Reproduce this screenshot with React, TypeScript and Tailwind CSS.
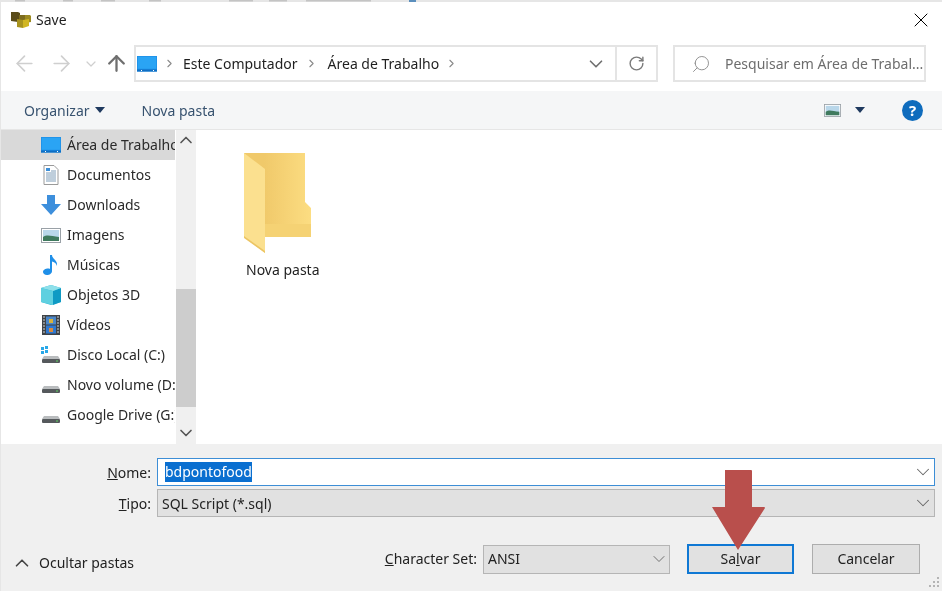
import { ChevronDown, ChevronUp, ChevronRight, ArrowLeft, ArrowRight, ArrowUp, RotateCw, Search, X } from "lucide-react";

function DesktopIcon() {
  return (
    <svg width="20" height="16" viewBox="0 0 20 16">
      <rect x="0" y="0" width="20" height="15.5" fill="#1e8fe6" />
      <rect x="0.7" y="0.7" width="18.6" height="12" fill="#2aa4f4" />
      <rect x="0" y="13.5" width="20" height="2" fill="#0f6fc4" />
      <rect x="4" y="14" width="1" height="1" fill="#fff" />
      <rect x="16" y="14" width="1" height="1" fill="#fff" />
    </svg>
  );
}

function DocIcon() {
  return (
    <svg width="20" height="20" viewBox="0 0 20 20">
      <path d="M3 0.5h10l4 4v15H3z" fill="#fff" stroke="#9a9a9a" />
      <path d="M5 3h4v3H5z" fill="#3c8fd8" />
      <path d="M10 6h5M5 8h10M5 10h10M5 12h10M5 14h10M5 16h10" stroke="#7f9db8" />
    </svg>
  );
}

function DownloadIcon() {
  return (
    <svg width="20" height="20" viewBox="0 0 20 20">
      <path d="M6 0h8v9h6l-10 11L0 9h6z" fill="#3d8fdc" />
    </svg>
  );
}

function PicturesIcon({ w = 20, h = 15 }: { w?: number; h?: number }) {
  return (
    <svg width={w} height={h} viewBox="0 0 20 15">
      <rect x="0.5" y="0.5" width="19" height="14" fill="#fff" stroke="#9aa1a7" />
      <rect x="2" y="2" width="16" height="11" fill="#b9d7ea" />
      <path d="M2 9c4-3 8-1 16 0v4H2z" fill="#3f7a5e" />
    </svg>
  );
}

function MusicIcon() {
  return (
    <svg width="16" height="20" viewBox="0 0 16 20">
      <path d="M7 0h2c0 4 6 5 5 11-1-3-3-4-5-4.500V16c0 2.500-2.500 4-5 4-2.500 0-4-1.500-4-3 0-2 2.500-3.500 5-3.500.7 0 1.500.1 2 .4z" fill="#1f8fe8" />
    </svg>
  );
}

function CubeIcon() {
  return (
    <svg width="20" height="20" viewBox="0 0 20 20">
      <path d="M10 0l10 3v14l-10 3L0 17V3z" fill="#2fb9d6" />
      <path d="M12 6l8-3v14l-8 3z" fill="#0f9ac4" />
      <path d="M10 0l10 3-8 3L0 3z" fill="#8fe0ea" />
      <path d="M0 3l12 3v14L0 17z" fill="#5fd0e0" />
    </svg>
  );
}

function VideoIcon() {
  return (
    <svg width="18" height="20" viewBox="0 0 18 20">
      <rect width="18" height="20" fill="#3f4347" />
      <path d="M1 2h2M1 5h2M1 8h2M1 11h2M1 14h2M1 17h2M15 2h2M15 5h2M15 8h2M15 11h2M15 14h2M15 17h2" stroke="#cfd3d6" />
      <rect x="4" y="1.500" width="10" height="8" fill="#4a86c8" />
      <rect x="4" y="10.500" width="10" height="8" fill="#2f78d0" />
      <rect x="7" y="4" width="4" height="4" fill="#d9b23c" />
      <rect x="7" y="13" width="4" height="4" fill="#d98a3c" />
    </svg>
  );
}

function DriveIcon({ windows }: { windows?: boolean }) {
  return (
    <svg width="20" height="18" viewBox="0 0 20 18">
      {windows && <path d="M0 1h3v3H0zM4 0h3v3H4zM0 5h3v3H0zM4 4h3v3H4z" fill="#29a8e8" />}
      <path d="M3 10h14l2 3H1z" fill="#b9bcbe" />
      <rect x="1" y="13" width="18" height="4" rx="1" fill="#55595c" />
      <rect x="15" y="14.500" width="2" height="1" fill="#5fd35f" />
    </svg>
  );
}

function FolderIcon() {
  return (
    <svg width="69" height="101" viewBox="0 0 69 101">
      <defs>
        <linearGradient id="back" x1="0" x2="1" y1="0" y2="0">
          <stop offset="0.3" stopColor="#f0c96a" />
          <stop offset="1" stopColor="#fcdd82" />
        </linearGradient>
      </defs>
      <path d="M1 1h61v49l6 6v29H1z" fill="url(#back)" />
      <path d="M22 72h46v13H22z" fill="#f5d274" />
      <path d="M1 1l21 16v84L1 85z" fill="#fbe08f" />
      <path d="M1 84l21 15v2L1 86z" fill="#ecc564" />
    </svg>
  );
}

function SaveLogo() {
  return (
    <svg width="20" height="18" viewBox="0 0 20 18">
      <path d="M0 1h7l2 1v8l-2 1-7-1z" fill="#5a4c1a" />
      <path d="M8 4h6l2 1v6h-8z" fill="#7d6c1e" />
      <path d="M14 4h5l1 1v6l-6 1z" fill="#9c8a22" />
      <path d="M6 8l6 1v8l-6-1z" fill="#a8931f" />
      <path d="M12 9l6-1v7l-6 2z" fill="#d1b622" />
    </svg>
  );
}

const places = [
  { label: "Área de Trabalho", icon: <DesktopIcon />, active: true },
  { label: "Documentos", icon: <DocIcon /> },
  { label: "Downloads", icon: <DownloadIcon /> },
  { label: "Imagens", icon: <PicturesIcon /> },
  { label: "Músicas", icon: <MusicIcon /> },
  { label: "Objetos 3D", icon: <CubeIcon /> },
  { label: "Vídeos", icon: <VideoIcon /> },
  { label: "Disco Local (C:)", icon: <DriveIcon windows /> },
  { label: "Novo volume (D:)", icon: <DriveIcon /> },
  { label: "Google Drive (G:)", icon: <DriveIcon /> },
];

function Caret({ color = "#1f3a5f" }: { color?: string }) {
  return (
    <svg width="10" height="6" viewBox="0 0 10 6">
      <path d="M0 0h10L5 6z" fill={color} />
    </svg>
  );
}

export default function App() {
  return (
    <div className="relative flex h-[591px] w-[942px] flex-col overflow-hidden border-l border-[#e6e6e6] bg-white font-['Noto_Sans',sans-serif] text-[14px] text-[#1f1f1f] blur-[0.35px]">
      {/* bits of the window behind, peeking over the top edge */}
      <svg className="absolute left-0 top-0" width="480" height="3" viewBox="0 0 480 3">
        <path d="M14 0h10v1.500H14zM62 0h10v1.500H62zM100 0h14v1.500h-14zM148 0h12v1.500h-12zM228 0h24v1.500h-24zM268 0h18v1.500h-18zM305 0h65v1.500h-65z" fill="#c4c4c4" />
        <rect x="408" y="0" width="7" height="2" fill="#5b8fbd" />
      </svg>

      {/* Title bar */}
      <div className="flex h-[45px] shrink-0 items-center justify-between border-t-2 border-[#e6e6e6] pb-[8px] pl-[10px] pr-[9px]">
        <div className="flex items-center gap-[5px]">
          <SaveLogo />
          <span className="pb-[1px]">Save</span>
        </div>
        <X size={24} strokeWidth={1} className="text-black" />
      </div>

      {/* Address row */}
      <div className="flex h-[46px] shrink-0 items-start pl-[11px] pr-[15px]">
        <div className="flex h-[37px] w-[122px] items-center text-[#cfcfcf]">
          <ArrowLeft size={25} strokeWidth={1.6} />
          <ArrowRight size={25} strokeWidth={1.6} className="ml-[12px]" />
          <ChevronDown size={16} strokeWidth={1.8} className="ml-[9px]" />
          <ArrowUp size={25} strokeWidth={2.2} className="ml-[5px] text-[#6f6f6f]" />
        </div>
        <div className="flex h-[37px] w-[524px] items-center border-2 border-[#e4e4e4] pl-[1px]">
          <DesktopIcon />
          <ChevronRight size={13} strokeWidth={2} className="ml-[6px] text-[#8a8a8a]" />
          <span className="ml-[7px]">Este Computador</span>
          <ChevronRight size={13} strokeWidth={2} className="ml-[7px] text-[#8a8a8a]" />
          <span className="ml-[10px]">Área de Trabalho</span>
          <ChevronRight size={13} strokeWidth={2} className="ml-[6px] text-[#8a8a8a]" />
          <div className="ml-auto flex h-full items-center">
            <ChevronDown size={22} strokeWidth={1.8} className="mr-[8px] text-[#6f6f6f]" />
            <div className="flex h-full w-[41px] items-center justify-center border-l-2 border-[#e4e4e4]">
              <RotateCw size={17} strokeWidth={2} className="text-[#7a7a7a]" />
            </div>
          </div>
        </div>
        <div className="ml-[15px] flex h-[37px] w-[253px] items-center border-2 border-[#e4e4e4] pl-[16px] text-[#6d6d6d]">
          <Search size={20} strokeWidth={1.1} className="-scale-x-100 text-[#8a8a8a]" />
          <span className="ml-[14px]">Pesquisar em Área de Trabal...</span>
        </div>
      </div>

      {/* Toolbar */}
      <div className="flex h-[39px] shrink-0 items-center border-b border-[#e6e6e6] bg-[#f5f6f7] pl-[23px] pr-[19px] text-[#37526f]">
        <span>Organizar</span>
        <span className="ml-[5px]"><Caret /></span>
        <span className="ml-[37px]">Nova pasta</span>
        <span className="ml-auto"><PicturesIcon w={17} h={13} /></span>
        <span className="ml-[14px] mr-[37px]"><Caret /></span>
        <div className="flex h-[21px] w-[21px] items-center justify-center rounded-full bg-[#0f6cbd] text-[15px] font-bold text-white">?</div>
      </div>

      {/* Main */}
      <div className="flex min-h-0 flex-1">
        <div className="flex w-[174px] shrink-0 flex-col overflow-hidden">
          {places.map((p) => (
            <div key={p.label} className={`flex h-[30px] shrink-0 items-center whitespace-nowrap ${p.active ? "bg-[#d9d9d9]" : ""}`}>
              <div className="flex w-[66px] shrink-0 justify-center pl-[34px]">{p.icon}</div>
              <span className="pb-[2px] text-[#2a2a2a]">{p.label}</span>
            </div>
          ))}
        </div>
        <div className="ml-[1px] flex w-[20px] shrink-0 flex-col items-center bg-[#f0f0f0] text-[#555]">
          <ChevronUp size={20} strokeWidth={2} />
          <div className="mt-[139px] h-[118px] w-full bg-[#cdcdcd]" />
          <ChevronDown size={20} strokeWidth={2} className="mt-[16px]" />
        </div>
        <div className="flex flex-1 flex-col items-start pl-[50px] pt-[22px]">
          <div className="flex flex-col items-center">
            <div className="-ml-[3px] self-start"><FolderIcon /></div>
            <span className="mt-[6px]">Nova pasta</span>
          </div>
        </div>
      </div>

      {/* Bottom panel */}
      <div className="flex h-[147px] shrink-0 flex-col bg-[#f0f0f0] pr-[7px] pt-[14px] text-[#222]">
        <div className="flex items-center">
          <span className="w-[150px] text-right"><u>N</u>ome:</span>
          <div className="ml-[6px] flex h-[28px] flex-1 items-center border border-[#3d8ed6] bg-white pl-[7px]">
            <span className="bg-[#0a6fd0] leading-[20px] text-white">bdpontofood</span>
            <ChevronDown size={22} strokeWidth={1.1} className="ml-auto text-[#666]" />
          </div>
        </div>
        <div className="mt-[3px] flex items-center">
          <span className="w-[150px] text-right"><u>T</u>ipo:</span>
          <div className="ml-[6px] flex h-[28px] flex-1 items-center border border-[#b5b5b5] bg-[#e1e1e1] pl-[4px]">
            <span>SQL Script (*.sql)</span>
            <ChevronDown size={22} strokeWidth={1.1} className="ml-auto text-[#666]" />
          </div>
        </div>
        <div className="mt-[27px] flex items-center pl-[10px]">
          <ChevronUp size={22} strokeWidth={1.8} className="mt-[7px] text-[#444]" />
          <span className="ml-[6px] mt-[6px]">Ocultar pastas</span>
          <span className="ml-auto pb-[2px]"><u>C</u>haracter Set:</span>
          <div className="ml-[6px] flex h-[29px] w-[187px] items-center border border-[#b5b5b5] bg-[#e1e1e1] pl-[4px]">
            <span className="pb-[2px]">ANSI</span>
            <ChevronDown size={20} strokeWidth={1.1} className="ml-auto text-[#666]" />
          </div>
          <button className="ml-[17px] h-[30px] w-[107px] border-2 border-[#0f78d4] bg-[#e1e1e1] pb-[2px]">Sa<u>l</u>var</button>
          <button className="ml-[18px] mr-[15px] h-[30px] w-[108px] border border-[#adadad] bg-[#e1e1e1] pb-[2px]">Cancelar</button>
        </div>
      </div>

      {/* Resize grip */}
      <svg className="absolute bottom-[4px] right-[3px]" width="10" height="10" viewBox="0 0 10 10">
        <path d="M8 0h2v2H8zM4 4h2v2H4zM8 4h2v2H8zM0 8h2v2H0zM4 8h2v2H4zM8 8h2v2H8z" fill="#b4b4b4" />
      </svg>

      {/* Red arrow annotation */}
      <svg className="absolute left-[711px] top-[469px]" width="53" height="82" viewBox="0 0 53 82">
        <path d="M13 1h26a1 1 0 0 1 1 1v36h12a1 1 0 0 1 1 1L26 81 0 38h13z" fill="#b94f4c" />
      </svg>
    </div>
  );
}
